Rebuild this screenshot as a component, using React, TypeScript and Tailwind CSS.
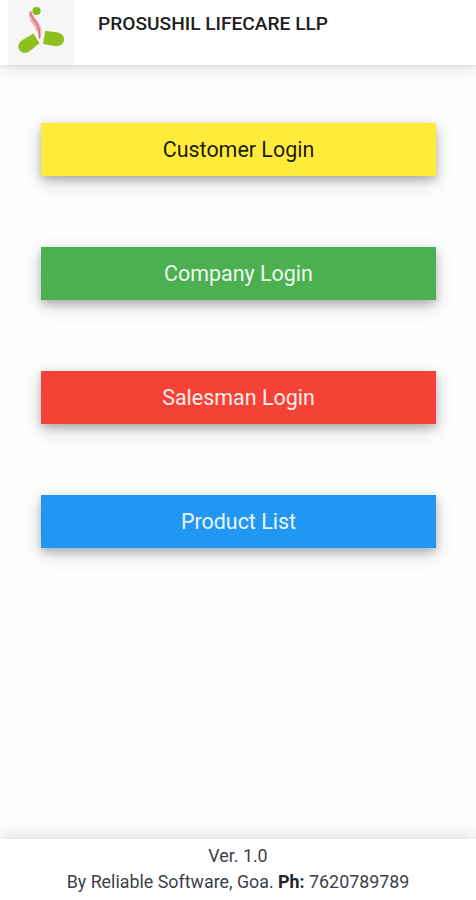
interface MenuItem {
  label: string;
  className: string;
}

const MENU_ITEMS: MenuItem[] = [
  { label: 'Customer Login', className: 'bg-[#ffeb3b] text-black/90' },
  { label: 'Company Login', className: 'bg-[#4caf50] text-white/90' },
  { label: 'Salesman Login', className: 'bg-[#f44336] text-white/90' },
  { label: 'Product List', className: 'bg-[#2196f3] text-white/90' },
];

function Logo() {
  return (
    <div className="ml-2 h-full w-[66px] flex-shrink-0 bg-[#f6f6f6]">
      <svg width="66" height="65" viewBox="0 0 66 65" fill="none" aria-hidden="true">
        {/* Ribbon */}
        <path d="M22.500 10c-3 4.500-1.500 9.500 2.500 14.500 3.500 4.500 5 9 6.700 15 2.800-7 2.300-12-1.200-17-3.200-4.500-6.500-8-8-12.500z" fill="#f3b4b7" />
        <path d="M22.400 11.500c.5 6 5 9.300 7.100 13.500 1.900 4 2.200 8.500 2 13.500" stroke="#da6a73" strokeWidth="1.500" />
        <path d="M21.500 15.500l4 .5M23.500 20.500l4.500-.5M26.500 25l3.500-1M28.500 29.500l3-1" stroke="#df7d84" strokeWidth=".9" />
        <circle cx="28.500" cy="11" r="4.100" fill="#84b81e" />
        {/* Capsules */}
        <path d="M25.500 33.500l6 9.700-9.300 7.500c-4 3.200-8.400 2.700-10.800-.7-2.200-3.600-1-7.300 3-9.900z" fill="#8fc01f" />
        <path d="M37.200 30.800l11.700 1.500c5 .8 7.500 4.200 7.100 7.900-.5 4.200-4.300 6.300-8.900 5.900l-12-2.200z" fill="#8fc01f" />
      </svg>
    </div>
  );
}

export default function App() {
  return (
    <div className="flex h-[900px] w-[476px] flex-col overflow-hidden bg-[#fefefe] font-['Roboto',sans-serif]">
      <header className="z-10 flex h-[65px] flex-shrink-0 bg-white shadow-[0_2px_5px_rgba(0,0,0,0.08),0_4px_20px_rgba(0,0,0,0.1)]">
        <Logo />
        <h1 className="ml-6 mt-[10px] text-[19.150px] font-medium leading-7 text-[#202020]">
          PROSUSHIL LIFECARE LLP
        </h1>
      </header>

      <main className="flex flex-1 flex-col gap-[71px] px-[41px] pt-[58px]">
        {MENU_ITEMS.map((item) => (
          <button
            key={item.label}
            className={`h-[53px] w-[395px] pt-0.5 text-[21.450px] shadow-[0_4px_8px_rgba(0,0,0,0.2),0_6px_20px_rgba(0,0,0,0.19)] ${item.className}`}
          >
            {item.label}
          </button>
        ))}
      </main>

      <footer className="h-[61px] flex-shrink-0 bg-white pt-1 text-center text-[17.850px] leading-[26px] text-[#3c4147] shadow-[0_-2px_20px_rgba(0,0,0,0.15)]">
        <p>Ver. 1.0</p>
        <p>
          By Reliable Software, Goa. <b className="font-bold text-[#212529]">Ph:</b> 7620789789
        </p>
      </footer>
    </div>
  );
}
